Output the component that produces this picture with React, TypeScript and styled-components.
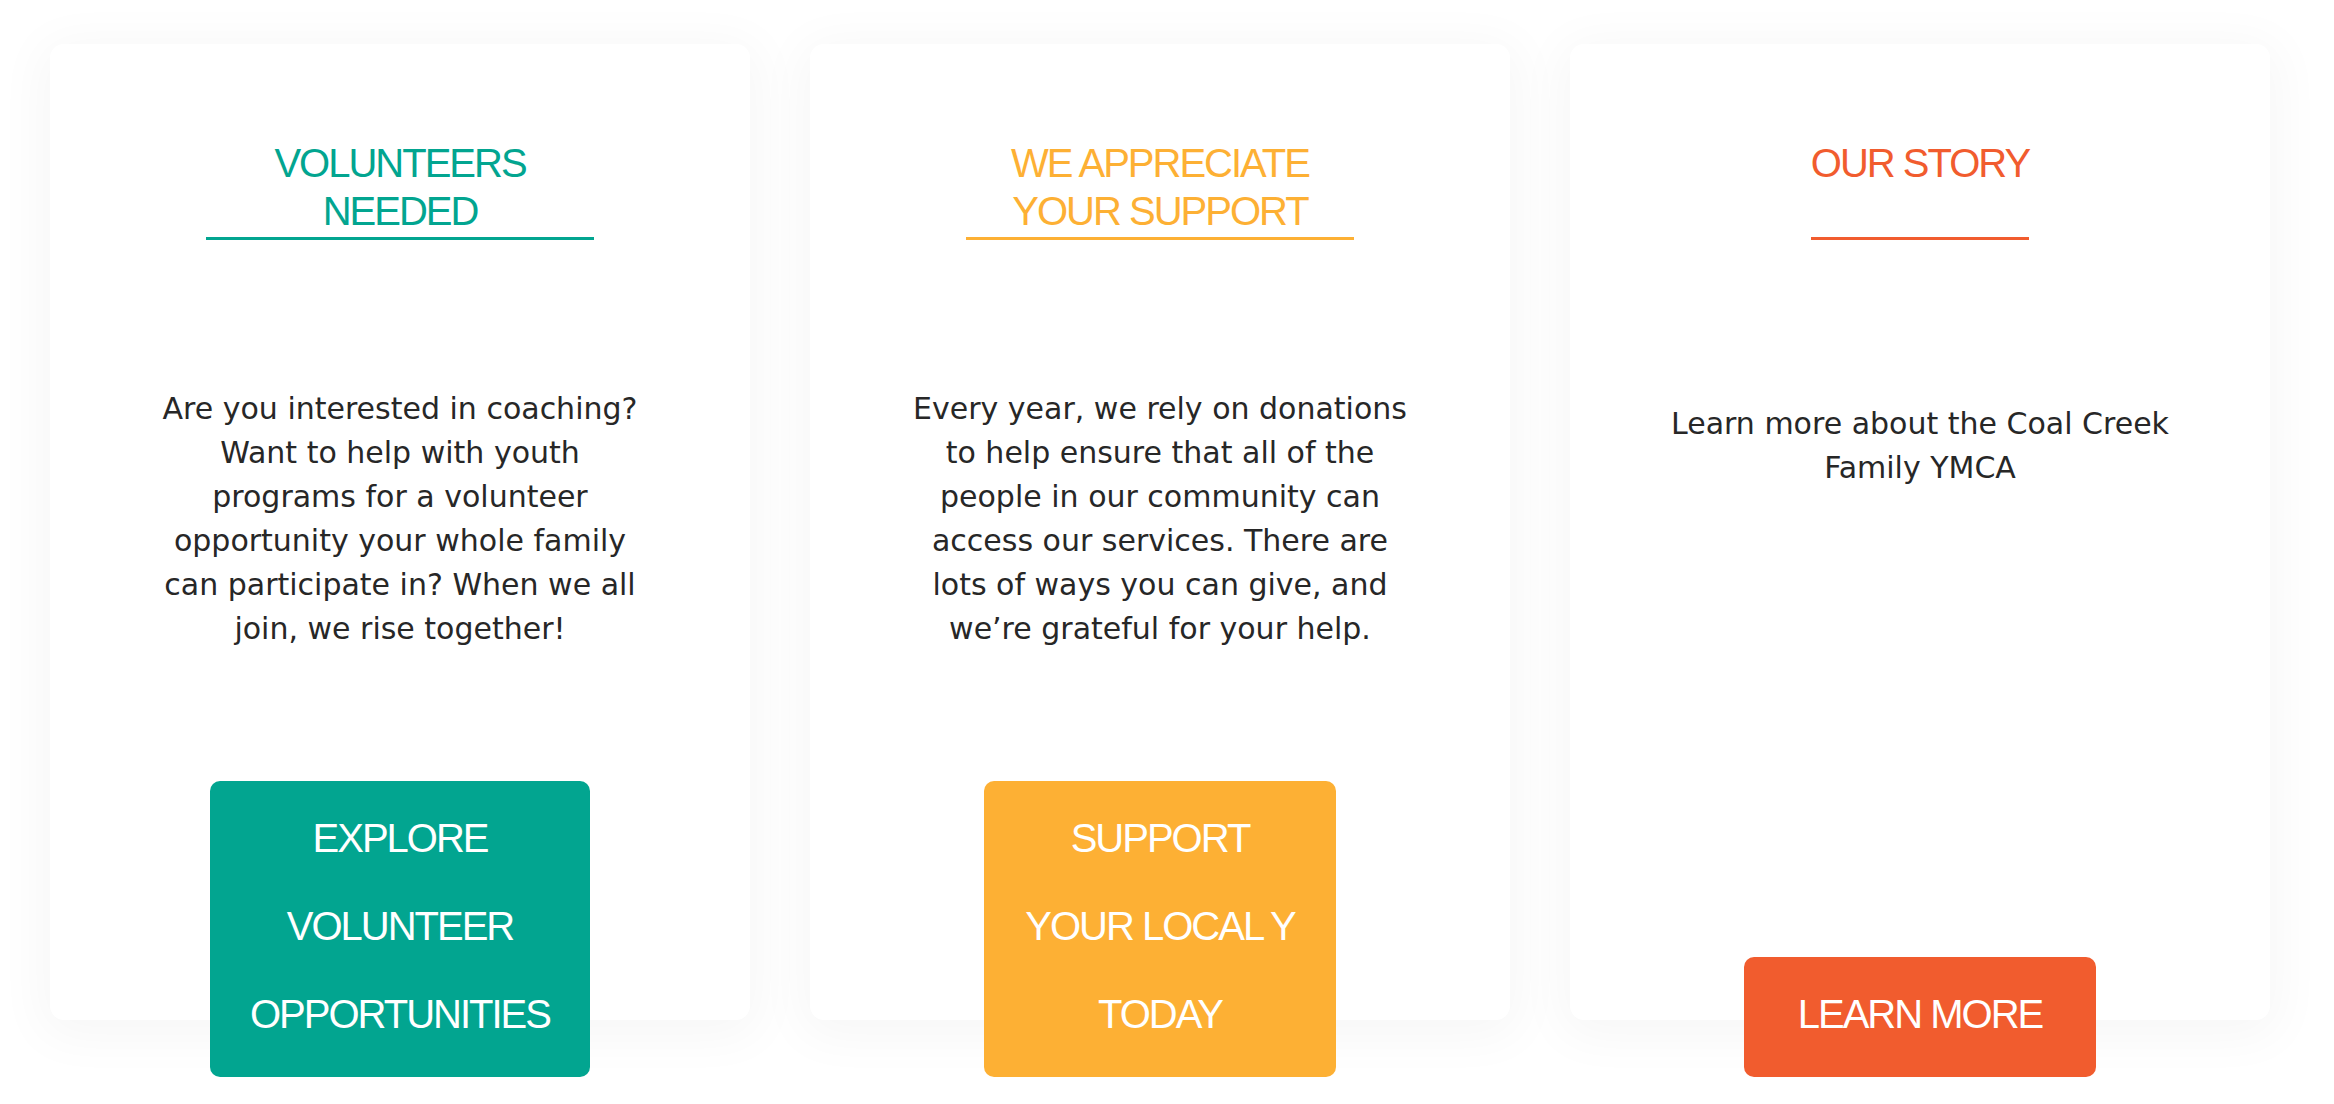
import React from "react";
import styled, { createGlobalStyle } from "styled-components";

const GlobalStyle = createGlobalStyle`
  html, body {
    margin: 0;
    padding: 0;
    background: #ffffff;
  }
  body {
    font-family: "Liberation Sans", Arial, sans-serif;
    -webkit-font-smoothing: antialiased;
  }
  * { box-sizing: border-box; }
`;

const Page = styled.main`
  min-height: 1104px;
  padding: 44px 64px 0 50px;
  background: #ffffff;
`;

const CardRow = styled.section`
  display: grid;
  grid-template-columns: repeat(3, 700px);
  column-gap: 60px;
`;

const Card = styled.article`
  height: 976px;
  background: #ffffff;
  border-radius: 14px;
  box-shadow: 0 8px 50px 10px rgba(0, 0, 0, 0.035);
  display: flex;
  flex-direction: column;
  align-items: center;
  padding-top: 95px;
`;

const Heading = styled.h2<{ $color: string }>`
  margin: 0;
  max-width: 388px;
  min-height: 101px;
  padding-bottom: 2px;
  border-bottom: 3px solid ${(p) => p.$color};
  color: ${(p) => p.$color};
  font-family: "Liberation Sans", Arial, sans-serif;
  font-weight: 400;
  font-size: 40px;
  line-height: 48px;
  letter-spacing: -2px;
  text-align: center;
`;

const Body = styled.p<{ $gap: number }>`
  margin: ${(p) => p.$gap}px 0 0;
  width: 506px;
  color: #272727;
  font-family: "DejaVu Sans", Verdana, sans-serif;
  font-size: 30px;
  line-height: 44px;
  text-align: center;
`;

const Button = styled.a<{ $color: string; $width: number }>`
  margin-top: auto;
  margin-bottom: -57px;
  width: ${(p) => p.$width}px;
  padding: 13px 0 19px;
  border-radius: 10px;
  background: ${(p) => p.$color};
  color: #ffffff;
  font-family: "Liberation Sans", Arial, sans-serif;
  font-size: 40px;
  line-height: 88px;
  letter-spacing: -2px;
  text-align: center;
  white-space: nowrap;
  text-decoration: none;
  display: block;
  cursor: pointer;
`;

const ButtonLine = styled.span`
  display: block;
`;

type CardData = {
  color: string;
  title: string;
  body: string;
  gap: number;
  lines: string[];
  width: number;
};

const cards: CardData[] = [
  {
    color: "#02a590",
    title: "VOLUNTEERS NEEDED",
    body:
      "Are you interested in coaching? Want to help with youth programs for a volunteer opportunity your whole family can participate in? When we all join, we rise together!",
    gap: 147,
    lines: ["EXPLORE", "VOLUNTEER", "OPPORTUNITIES"],
    width: 380,
  },
  {
    color: "#fdb034",
    title: "WE APPRECIATE YOUR SUPPORT",
    body:
      "Every year, we rely on donations to help ensure that all of the people in our community can access our services. There are lots of ways you can give, and we\u2019re grateful for your help.",
    gap: 147,
    lines: ["SUPPORT", "YOUR LOCAL Y", "TODAY"],
    width: 352,
  },
  {
    color: "#f15c2e",
    title: "OUR STORY",
    body: "Learn more about the Coal Creek Family YMCA",
    gap: 162,
    lines: ["LEARN MORE"],
    width: 352,
  },
];

export default function App() {
  return (
    <>
      <GlobalStyle />
      <Page>
        <CardRow>
          {cards.map((c) => (
            <Card key={c.title}>
              <Heading $color={c.color}>{c.title}</Heading>
              <Body $gap={c.gap}>{c.body}</Body>
              <Button $color={c.color} $width={c.width} href="#">
                {c.lines.map((l) => (
                  <ButtonLine key={l}>{l}</ButtonLine>
                ))}
              </Button>
            </Card>
          ))}
        </CardRow>
      </Page>
    </>
  );
}
